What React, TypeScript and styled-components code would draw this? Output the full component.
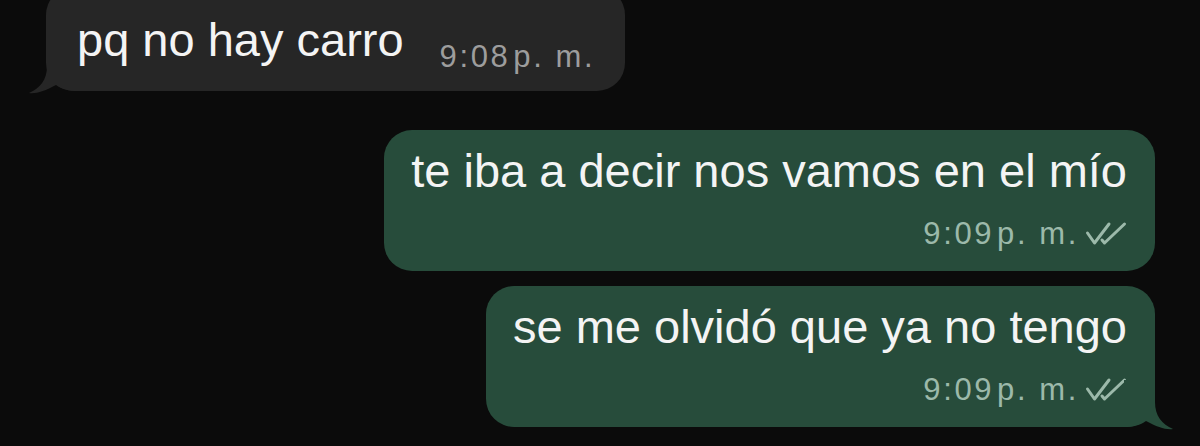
import React from 'react';
import styled, {createGlobalStyle} from 'styled-components';

const GlobalStyle = createGlobalStyle`
  html, body {
    margin: 0;
    padding: 0;
    background: #0b0b0b;
  }
`;

type Side = 'in' | 'out';

const palette = {
  in: {bubble: '#262626', time: '#9d9d9d'},
  out: {bubble: '#274c3b', time: '#9cb9aa'},
};

const Screen = styled.div`
  width: 1200px;
  height: 446px;
  overflow: hidden;
  background: #0b0b0b;
  display: flex;
  flex-direction: column;
  font-family: 'Liberation Sans', Arial, sans-serif;
`;

const Row = styled.div<{$side: Side; $gap: number}>`
  display: flex;
  justify-content: ${p => (p.$side === 'in' ? 'flex-start' : 'flex-end')};
  padding: 0 45px 0 46px;
  margin-top: ${p => p.$gap}px;
`;

const Bubble = styled.div<{$side: Side}>`
  position: relative;
  background: ${p => palette[p.$side].bubble};
  border-radius: 28px;
  color: #f4f4f4;
`;

const InlineBubble = styled(Bubble)`
  display: flex;
  align-items: flex-end;
  gap: 36px;
  padding: 26px 30px 16px 31px;
`;

const StackBubble = styled(Bubble)`
  display: flex;
  flex-direction: column;
  align-items: flex-end;
  padding: 14px 28px 19px 27px;
`;

const Body = styled.div<{$inline?: boolean}>`
  font-size: 47px;
  line-height: 54px;
  white-space: nowrap;
  align-self: ${p => (p.$inline ? 'auto' : 'flex-start')};
  margin-bottom: ${p => (p.$inline ? 8 : 0)}px;
`;

const Meta = styled.div<{$side: Side}>`
  display: flex;
  align-items: center;
  font-size: 31px;
  line-height: 36px;
  letter-spacing: 2.6px;
  color: ${p => palette[p.$side].time};
  white-space: nowrap;
`;

const StackMeta = styled(Meta)`
  margin-top: 18px;
`;

const Ampm = styled.span`
  margin-left: 3px;
`;

const Tail = styled.svg<{$side: Side}>`
  position: absolute;
  bottom: -3px;
  width: 50px;
  height: 50px;
  ${p => (p.$side === 'in' ? 'left: -18px; transform: scaleX(-1);' : 'right: -19px;')}
`;

const Ticks = styled.svg`
  display: block;
  flex-shrink: 0;
  width: 42px;
  height: 26px;
  margin-left: 6px;
`;

const BubbleTail = ({side}: {side: Side}) => (
  <Tail $side={side} viewBox="0 0 50 50">
    <path
      d="M0 0 H31 V22 C31 36 38 44 49 49 C42 50 33 47 22 41 C16 45 10 47 0 47 Z"
      fill={palette[side].bubble}
    />
  </Tail>
);

const ReadTicks = () => (
  <Ticks
    viewBox="0 0 42 26"
    fill="none"
    stroke={palette.out.time}
    strokeWidth="3"
    strokeLinecap="round"
    strokeLinejoin="round"
  >
    <path d="M2.5 12 L9.5 22 L24 3" />
    <path d="M17 19 L19.5 22 L39.5 3" />
  </Ticks>
);

const Time = ({side, value, read}: {side: Side; value: string; read?: boolean}) => {
  const Wrap = side === 'in' ? Meta : StackMeta;
  return (
    <Wrap $side={side}>
      {value}
      <Ampm>p. m.</Ampm>
      {read && <ReadTicks />}
    </Wrap>
  );
};

export default function App() {
  return (
    <Screen>
      <GlobalStyle />
      <Row $side="in" $gap={-13}>
        <InlineBubble $side="in">
          <Body $inline>pq no hay carro</Body>
          <Time side="in" value="9:08" />
          <BubbleTail side="in" />
        </InlineBubble>
      </Row>
      <Row $side="out" $gap={39}>
        <StackBubble $side="out">
          <Body>te iba a decir nos vamos en el mío</Body>
          <Time side="out" value="9:09" read />
        </StackBubble>
      </Row>
      <Row $side="out" $gap={15}>
        <StackBubble $side="out">
          <Body>se me olvidó que ya no tengo</Body>
          <Time side="out" value="9:09" read />
          <BubbleTail side="out" />
        </StackBubble>
      </Row>
    </Screen>
  );
}
